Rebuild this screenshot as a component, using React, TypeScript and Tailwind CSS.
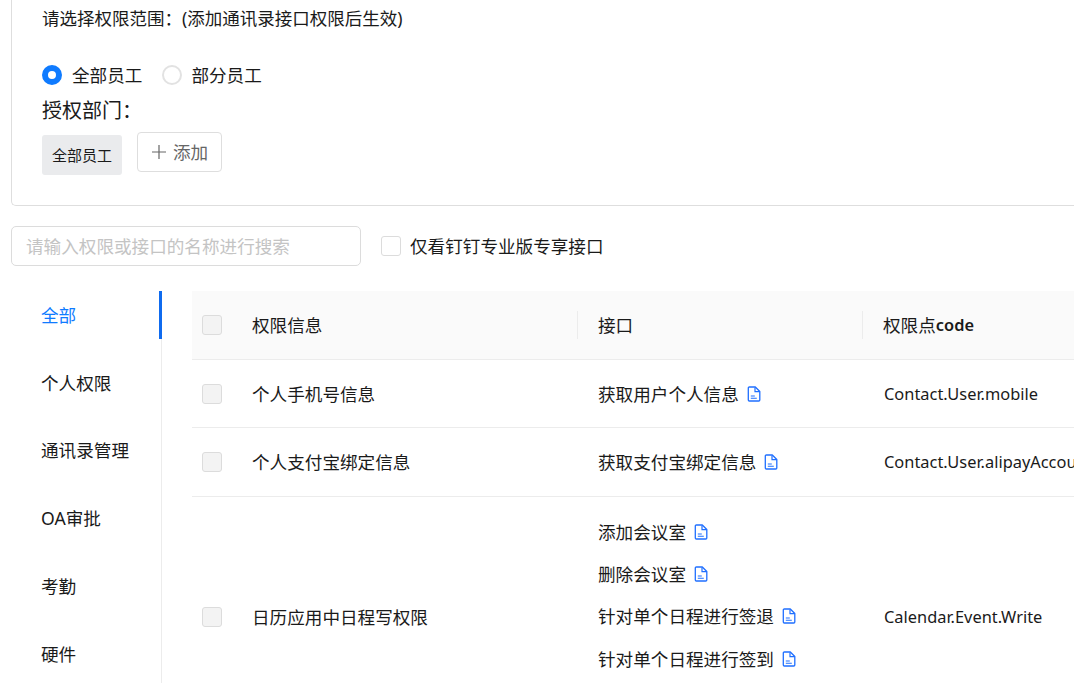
const cjk = "font-['Noto_Sans','Noto_Sans_CJK_SC',sans-serif]";

const tabs = ["全部", "个人权限", "通讯录管理", "OA审批", "考勤", "硬件"];

const DocIcon = () => (
  <svg width="14" height="16" viewBox="0 0 14 16" fill="none" className="shrink-0">
    <path
      d="M2.4 1h5.9l4.5 4.5v8.4c0 .6-.5 1.1-1.1 1.1H2.4c-.6 0-1.1-.5-1.1-1.1V2.1c0-.6.5-1.1 1.1-1.1z"
      stroke="#1f6fff"
      strokeWidth="1.3"
      strokeLinejoin="round"
    />
    <path d="M8 1.4v4.3h4.6" stroke="#1f6fff" strokeWidth="1.2" />
    <path d="M3.8 10h4M3.8 12.3h6" stroke="#1f6fff" strokeWidth="1.1" />
  </svg>
);

const Check = () => (
  <div className="w-5 h-5 rounded-[3px] border border-[#dcdcdc] bg-[#f3f3f3] shrink-0" />
);

const Api = ({ name }: { name: string }) => (
  <div className="flex items-center gap-2 h-[42.4px]">
    <span>{name}</span>
    <DocIcon />
  </div>
);

const Row = ({ title, apis, code }: { title: string; apis: string[]; code: string }) => (
  <div className="flex items-center border-b border-[#ececec] py-[12.55px] whitespace-nowrap">
    <div className="w-[60px] pl-[10px]">
      <Check />
    </div>
    <div className="w-[346px]">{title}</div>
    <div className={apis.length > 1 ? "w-[286px] pt-px" : "w-[286px]"}>
      {apis.map((a) => (
        <Api key={a} name={a} />
      ))}
      {/* the row runs on below the fold */}
      {apis.length > 1 && <div className="h-[44px]" />}
    </div>
    <div className="flex-1 text-[16.4px] pt-px">{code}</div>
  </div>
);

export default function App() {
  return (
    <div className={`w-[1074px] h-[683px] overflow-hidden bg-white text-[17.6px] text-[#1a1a1a] ${cjk}`}>
      <div className="ml-[11px] w-[1100px] h-[206px] border border-t-0 border-r-0 border-[#dedede] rounded-bl-[5px] pl-[30px]">
        <div className="pt-[5px] leading-[26px] text-[17.5px]">请选择权限范围：(添加通讯录接口权限后生效)</div>
        <div className="flex items-center mt-[32px] h-6">
          <span className="w-5 h-5 rounded-full border-[6px] border-[#0f7bff] bg-white" />
          <span className="ml-[10px]">全部员工</span>
          <span className="ml-5 w-5 h-5 rounded-full border-2 border-[#e2e2e2] bg-white" />
          <span className="ml-[9px]">部分员工</span>
        </div>
        <div className="mt-[10px] text-[20px] leading-7">授权部门：</div>
        <div className="flex items-start mt-[7px]">
          <div className="mt-[3px] w-20 h-10 rounded-[3px] bg-[#eaebed] text-[15px] flex items-center justify-center">
            全部员工
          </div>
          <div className="ml-[15px] w-[85px] h-10 rounded-[4px] border border-[#dedede] text-[#666] flex items-center justify-center gap-[6px]">
            <svg width="16" height="16" viewBox="0 0 16 16" stroke="#666" strokeWidth="1.2">
              <path d="M8 1v14M1 8h14" />
            </svg>
            添加
          </div>
        </div>
      </div>

      <div className="flex items-center ml-[11px] mt-5">
        <div className="w-[350px] h-10 rounded-[5px] border border-[#dcdcdc] pl-[14px] flex items-center text-[#c4c4c4]">
          请输入权限或接口的名称进行搜索
        </div>
        <span className="ml-5 w-5 h-5 rounded-[3px] border border-[#dcdcdc] bg-white" />
        <span className="ml-[9px]">仅看钉钉专业版专享接口</span>
      </div>

      <div className="flex mt-[25px]">
        <div className="w-[162px] h-[400px] border-r border-[#ececec] shrink-0">
          {tabs.map((t, i) => (
            <div
              key={t}
              className={
                i === 0
                  ? "h-12 mb-[19.8px] pl-[41px] flex items-center text-[#0f7bff] border-r-[3px] border-[#0f6bef] -mr-px"
                  : "h-12 mb-[19.8px] pl-[41px] flex items-center"
              }
            >
              {t}
            </div>
          ))}
        </div>
        <div className="ml-[30px] w-[950px] shrink-0">
          <div className="flex items-center h-[69px] bg-[#fafafa] border-b border-[#ececec] whitespace-nowrap">
            <div className="w-[60px] pl-[10px]">
              <Check />
            </div>
            <div className="w-[325px]">权限信息</div>
            <div className="w-[285px] border-l border-[#ececec] h-7 pl-5 flex items-center">接口</div>
            <div className="flex-1 border-l border-[#ececec] h-7 pl-5 flex items-center">
              权限点<span className="font-semibold text-[16.4px]">code</span>
            </div>
          </div>
          <Row title="个人手机号信息" apis={["获取用户个人信息"]} code="Contact.User.mobile" />
          <Row title="个人支付宝绑定信息" apis={["获取支付宝绑定信息"]} code="Contact.User.alipayAccount" />
          <Row
            title="日历应用中日程写权限"
            apis={["添加会议室", "删除会议室", "针对单个日程进行签退", "针对单个日程进行签到"]}
            code="Calendar.Event.Write"
          />
        </div>
      </div>
    </div>
  );
}
